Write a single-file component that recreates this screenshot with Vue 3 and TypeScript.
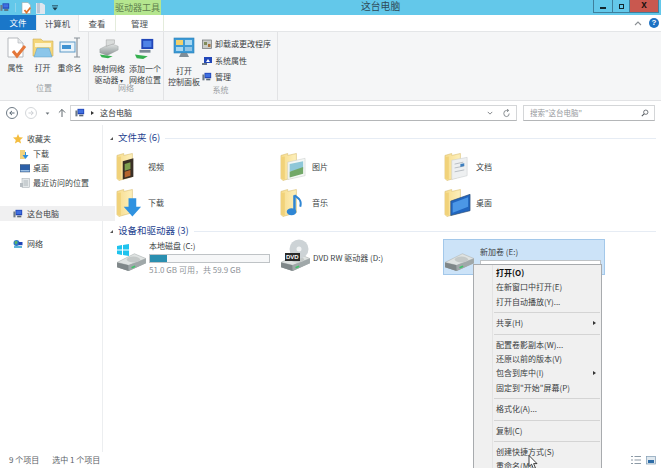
<script setup lang="ts">
const ribbonBig = [
  { icon: 'i-props', lines: ['属性'] },
  { icon: 'i-open', lines: ['打开'] },
  { icon: 'i-rename', lines: ['重命名'] },
]
const folders = [
  { name: '视频', overlay: 'video' },
  { name: '图片', overlay: 'picture' },
  { name: '文档', overlay: 'doc' },
  { name: '下载', overlay: 'down' },
  { name: '音乐', overlay: 'music' },
  { name: '桌面', overlay: 'desk' },
]
const favs = [
  { name: '下载', icon: 'i-fav-down' },
  { name: '桌面', icon: 'i-fav-desk' },
  { name: '最近访问的位置', icon: 'i-fav-recent' },
]
const menu: { label: string; bold?: boolean; arrow?: boolean; hot?: boolean }[][] = [
  [{ label: '打开(O)', bold: true }, { label: '在新窗口中打开(E)' }, { label: '打开自动播放(Y)...' }],
  [{ label: '共享(H)', arrow: true }],
  [
    { label: '配置卷影副本(W)...' },
    { label: '还原以前的版本(V)' },
    { label: '包含到库中(I)', arrow: true },
    { label: '固定到"开始"屏幕(P)' },
  ],
  [{ label: '格式化(A)...' }],
  [{ label: '复制(C)' }],
  [{ label: '创建快捷方式(S)' }, { label: '重命名(M)' }],
  [{ label: '属性(R)', hot: true }],
]
</script>

<template>
  <div class="win">
    <svg class="defs" aria-hidden="true">
      <defs>
        <linearGradient id="fy" x1="0" y1="0" x2="1" y2="0">
          <stop offset="0" stop-color="#f7dc8c" />
          <stop offset="1" stop-color="#fdf0bd" />
        </linearGradient>
        <linearGradient id="dg" x1="0" y1="0" x2="0" y2="1">
          <stop offset="0" stop-color="#e4e7e6" />
          <stop offset="1" stop-color="#8d9596" />
        </linearGradient>
        <symbol id="i-pc" viewBox="0 0 12 12">
          <rect x="3" y="1" width="8" height="6.5" fill="#2146b8" />
          <rect x="4" y="2" width="6" height="4" fill="#3f6fe0" />
          <rect x="0.5" y="3" width="2.5" height="7" fill="#6d7a88" />
          <rect x="5" y="8" width="5" height="2" fill="#5b6875" />
        </symbol>
        <symbol id="i-folder" viewBox="0 0 24 30">
          <path d="M1 3 L8 1 L8 3 L17 1 V25 L3 29 L1 27 Z" fill="url(#fy)" stroke="#d9bd6d" stroke-width=".6" />
          <path d="M1 5 L5 4 V28 L1 27 Z" fill="#f1d27a" />
        </symbol>
        <symbol id="i-drive" viewBox="0 0 32 26">
          <path d="M1 16 L19 7 L31 12 V17 L13 25 L1 21 Z" fill="url(#dg)" />
          <path d="M1 16 L19 7 L31 12 L13 19 Z" fill="#dfe3e2" stroke="#a7adad" stroke-width=".5" />
          <path d="M1 16 L13 19 V25 L1 21 Z" fill="#7f8789" />
          <path d="M13 19 L31 12 V17 L13 25 Z" fill="#a0a8a9" />
          <ellipse cx="18" cy="13" rx="7" ry="3" fill="#c4c9c8" />
          <rect x="16" y="20" width="4" height="1.6" fill="#3fc46a" transform="rotate(-22 18 21)" />
        </symbol>
        <symbol id="i-net-drive" viewBox="0 0 24 22">
          <path d="M2 11 L14 5 L22 8 V12 L10 18 L2 15 Z" fill="url(#dg)" stroke="#8f9697" stroke-width=".4" />
          <path d="M9 1 H18 V5 L9 8 Z" fill="#d9dcdb" stroke="#888" stroke-width=".4" />
          <path d="M2 17 L16 19 L11 21 L4 20 Z" fill="#35b04f" />
        </symbol>
        <symbol id="i-net-add" viewBox="0 0 24 24">
          <rect x="8" y="1" width="13" height="11" fill="#2146b8" />
          <rect x="10" y="3" width="9" height="7" fill="#4f83e6" />
          <rect x="6" y="13" width="12" height="3" fill="#7d8a96" />
          <path d="M1 18 L15 20 L10 23 L3 22 Z" fill="#35b04f" />
        </symbol>
      </defs>
    </svg>

    <div class="titlebar">
      <div class="qat">
        <svg class="ic12"><use href="#i-pc" /></svg>
        <i class="qat-sep"></i>
        <svg class="qat-doc" viewBox="0 0 10 12">
          <path d="M1 0.5 H7 L9.5 3 V11.5 H1 Z" fill="#fff" stroke="#9aa" stroke-width=".6" />
          <path d="M3.5 8 L5.5 10.5 L9.5 5.5" fill="none" stroke="#e0762e" stroke-width="1.8" />
        </svg>
        <svg class="qat-folder" viewBox="0 0 9 12">
          <path d="M0 1 H6 L9 3 V12 H0 Z" fill="#dfe6ee" />
          <rect x="1" y="1" width="3" height="10" fill="#b9c7d6" />
        </svg>
        <svg class="qat-arrow" viewBox="0 0 7 7">
          <rect x="0" y="0.5" width="7" height="1" fill="#1c3947" />
          <path d="M0.5 3 H6.5 L3.5 6.5 Z" fill="#1c3947" />
        </svg>
      </div>
      <div class="tool-tab">驱动器工具</div>
      <div class="title">这台电脑</div>
      <div class="winbtns">
        <div class="wb wb-min"><i></i></div>
        <div class="wb wb-max"><i></i></div>
        <div class="wb wb-close">x</div>
      </div>
    </div>

    <div class="tabs">
      <div class="tab-file">文件</div>
      <div class="tab tab-on">计算机</div>
      <div class="tab tab-view">查看</div>
      <div class="tab tab-manage">管理</div>
      <div class="tab-right">
        <svg class="chev" viewBox="0 0 8 5"><path d="M1 4 L4 1 L7 4" fill="none" stroke="#8a8f94" stroke-width="1.1" /></svg>
        <div class="help">?</div>
      </div>
    </div>

    <div class="ribbon">
      <section class="group g1">
        <div class="group-body">
          <div v-for="b in ribbonBig" :key="b.icon" class="big">
            <svg v-if="b.icon === 'i-props'" class="big-ic" viewBox="0 0 22 22">
              <path d="M3 1 H13 L18 6 V20 H3 Z" fill="#fff" stroke="#b5b9bd" />
              <path d="M13 1 V6 H18" fill="#e6e8ea" stroke="#b5b9bd" stroke-width=".7" />
              <path d="M8 14 L12 19 L20 9" fill="none" stroke="#e4773a" stroke-width="3" />
            </svg>
            <svg v-else-if="b.icon === 'i-open'" class="big-ic" viewBox="0 0 22 22">
              <path d="M1 2 H9 L11 4 H21 V19 H1 Z" fill="#f4d679" stroke="#cdae5a" stroke-width=".6" />
              <rect x="3" y="6" width="16" height="4" fill="#fdf4cf" />
              <path d="M5 11 H17 L20 20 H2 Z" fill="#8bc6ea" stroke="#5f9cc4" stroke-width=".5" />
            </svg>
            <svg v-else class="big-ic" viewBox="0 0 22 22">
              <rect x="1" y="5" width="15" height="10" fill="#e9f3fa" stroke="#5c9ac8" />
              <rect x="3" y="8" width="9" height="4" fill="#3f92d2" />
              <path d="M15 1 H21 M18 1 V20 M15 20 H21" stroke="#8a9299" stroke-width="1.2" fill="none" />
            </svg>
            <span>{{ b.lines[0] }}</span>
          </div>
        </div>
        <div class="group-label">位置</div>
      </section>
      <section class="group g2">
        <div class="group-body">
          <div class="big big-net">
            <svg class="big-ic"><use href="#i-net-drive" /></svg>
            <span>映射网络</span>
            <span>驱动器 <small class="tri">▾</small></span>
          </div>
          <div class="big big-net">
            <svg class="big-ic"><use href="#i-net-add" /></svg>
            <span>添加一个</span>
            <span>网络位置</span>
          </div>
        </div>
        <div class="group-label">网络</div>
      </section>
      <section class="group g3">
        <div class="group-body">
          <div class="big big-panel">
            <svg class="big-ic panel-ic" viewBox="0 0 22 22">
              <rect x="1" y="1" width="20" height="15" fill="#3d9ad6" stroke="#2b7fb5" stroke-width=".6" />
              <rect x="3" y="3" width="7" height="5" fill="#f2d06b" />
              <rect x="12" y="3" width="7" height="5" fill="#a7d8f2" />
              <rect x="3" y="10" width="7" height="4" fill="#a7d8f2" />
              <rect x="12" y="10" width="7" height="4" fill="#8fc4e6" />
              <path d="M8 16 H14 L16 20 H6 Z" fill="#7e8d98" />
            </svg>
            <span>打开</span>
            <span>控制面板</span>
          </div>
          <div class="small-list">
            <div class="small">
              <svg class="ic10" viewBox="0 0 10 10">
                <rect x="0.5" y="1" width="9" height="8.5" fill="#c9ccc8" stroke="#6d7174" stroke-width=".7" />
                <rect x="2" y="3" width="3" height="3" fill="#7f8c5a" />
                <rect x="6" y="5" width="2.5" height="3" fill="#a7713c" />
              </svg>
              卸载或更改程序
            </div>
            <div class="small">
              <svg class="ic10" viewBox="0 0 10 10">
                <rect x="2" y="1" width="8" height="6" fill="#2146b8" />
                <path d="M4 6 L6 3 L8 6 Z" fill="#fff" />
                <rect x="0" y="7" width="5" height="2" fill="#6d7a88" />
              </svg>
              系统属性
            </div>
            <div class="small">
              <svg class="ic10"><use href="#i-pc" /></svg>
              管理
            </div>
          </div>
        </div>
        <div class="group-label">系统</div>
      </section>
    </div>

    <div class="navbar">
      <div class="nav-btn nav-back">
        <svg viewBox="0 0 12 12"><path d="M9 6 H3.5 M6 3.5 L3.3 6 L6 8.5" fill="none" stroke="#4a5a68" stroke-width="1.1" /></svg>
      </div>
      <div class="nav-btn nav-fwd">
        <svg viewBox="0 0 12 12"><path d="M3 6 H8.5 M6 3.5 L8.7 6 L6 8.5" fill="none" stroke="#c8ccd0" stroke-width="1.1" /></svg>
      </div>
      <svg class="nav-drop" viewBox="0 0 6 4"><path d="M0.5 0.5 H5.5 L3 3.5 Z" fill="#6b7278" /></svg>
      <svg class="nav-up" viewBox="0 0 9 11"><path d="M4.5 10 V1.5 M1 5 L4.5 1.5 L8 5" fill="none" stroke="#5d656c" stroke-width="1.1" /></svg>
      <div class="address">
        <svg class="ic10"><use href="#i-pc" /></svg>
        <i class="crumb-tri"></i>
        <span class="crumb">这台电脑</span>
        <svg class="addr-drop" viewBox="0 0 8 5"><path d="M1 1 L4 4 L7 1" fill="none" stroke="#6c7176" stroke-width="1.1" /></svg>
        <svg class="addr-ref" viewBox="0 0 10 10"><path d="M8 5 A3 3.4 0 1 1 5 1.6 H7 M5.5 0 L7.5 1.6 L5.5 3.2" fill="none" stroke="#7e8388" stroke-width="1" /></svg>
      </div>
      <div class="search">
        <span>搜索"这台电脑"</span>
        <svg class="glass" viewBox="0 0 10 10"><circle cx="6" cy="4" r="2.7" fill="none" stroke="#50565c" stroke-width="1" /><path d="M4 6 L1 9" stroke="#50565c" stroke-width="1.3" /></svg>
      </div>
    </div>

    <div class="main">
      <aside class="side">
        <div class="side-row head">
          <svg class="ic10" viewBox="0 0 10 10"><path d="M5 0 L6.4 3.3 L10 3.6 L7.2 6 L8.1 9.6 L5 7.7 L1.9 9.6 L2.8 6 L0 3.6 L3.6 3.3 Z" fill="#f4bd3f" /></svg>
          收藏夹
        </div>
        <div v-for="f in favs" :key="f.name" class="side-row sub">
          <svg v-if="f.icon === 'i-fav-down'" class="ic10" viewBox="0 0 10 10">
            <path d="M0 1 H5 V10 H0 Z" fill="#f2d27b" />
            <path d="M6 3 V6 H8.5 L5.5 10 L2.5 6 H5 V3 Z" fill="#2f8fdc" />
          </svg>
          <svg v-else-if="f.icon === 'i-fav-desk'" class="ic10" viewBox="0 0 10 10">
            <rect x="0" y="1.5" width="10" height="7.5" fill="#2c5fa8" stroke="#4a5c70" stroke-width=".5" />
            <rect x="0.5" y="7" width="9" height="1.5" fill="#9cc0e4" />
          </svg>
          <svg v-else class="ic10" viewBox="0 0 10 10">
            <rect x="2" y="0.5" width="7.5" height="9" fill="#e4e8ea" stroke="#a0a7ac" stroke-width=".5" />
            <path d="M3.5 3 H8 M3.5 5 H8 M3.5 7 H8" stroke="#9aa2a8" stroke-width=".7" />
            <rect x="0" y="5" width="3" height="4" fill="#b6bdc2" />
          </svg>
          {{ f.name }}
        </div>
        <div class="side-row head pc-row">
          <svg class="ic10"><use href="#i-pc" /></svg>
          这台电脑
        </div>
        <div class="side-row head net-row">
          <svg class="ic10" viewBox="0 0 10 10">
            <circle cx="3.5" cy="4" r="3" fill="#2f78c8" />
            <path d="M1.5 2.5 L4 2 L4.5 4 L2.5 5.5 Z" fill="#5cb85c" />
            <rect x="5.5" y="3" width="4" height="3.2" fill="#2146b8" />
            <path d="M1 8 H9" stroke="#35a0d0" stroke-width="1.6" />
          </svg>
          网络
        </div>
      </aside>

      <main class="content">
        <div class="sec-head">
          <i class="sec-tri"></i><span>文件夹 (6)</span><b></b>
        </div>
        <div class="grid">
          <div v-for="f in folders" :key="f.overlay" class="folder">
            <svg class="folder-ic" viewBox="0 0 28 30">
              <use href="#i-folder" width="24" height="30" />
              <g v-if="f.overlay === 'video'">
                <path d="M7 9 L18 6 V25 L7 28 Z" fill="#3a3026" />
                <path d="M9 12 L15 10 V17 L9 19 Z" fill="#7fa04f" />
                <path d="M9 20 L15 18 V24 L9 26 Z" fill="#b5652e" />
              </g>
              <g v-else-if="f.overlay === 'picture'">
                <path d="M8 10 L26 6 V24 L8 28 Z" fill="#f4f7f5" stroke="#c4c8c6" stroke-width=".5" />
                <path d="M10 12 L24 9 V17 L10 20 Z" fill="#8ec7d8" />
                <path d="M10 20 L24 15 V22 L10 26 Z" fill="#72a868" />
              </g>
              <g v-else-if="f.overlay === 'doc'">
                <path d="M8 8 L24 5 V24 L8 28 Z" fill="#eef0f1" stroke="#c4c8ca" stroke-width=".5" />
                <path d="M11 12 L20 10 M11 16 L21 14 M11 20 L21 18" stroke="#a9b0b6" stroke-width=".8" />
                <path d="M17 12 L21 11 V14 L17 15 Z" fill="#3f7fbe" />
              </g>
              <path v-else-if="f.overlay === 'down'" d="M13 10 H21 V19 H26 L17 29 L8 19 H13 Z" fill="#2f92e0" />
              <g v-else-if="f.overlay === 'music'">
                <path d="M15 7 V23" stroke="#2f86d4" stroke-width="2.6" />
                <path d="M15 7 C19 10 23 12 21 19" fill="none" stroke="#2f86d4" stroke-width="2" />
                <ellipse cx="12" cy="24" rx="5" ry="3.6" fill="#2f86d4" />
              </g>
              <g v-else>
                <path d="M7 13 L27 6 V23 L7 28 Z" fill="#2166c0" stroke="#2d4f78" stroke-width=".7" />
                <path d="M9 15 L25 9 V19 L9 25 Z" fill="#4b97e6" />
              </g>
            </svg>
            <span>{{ f.name }}</span>
          </div>
        </div>

        <div class="sec-head sec-two">
          <i class="sec-tri"></i><span>设备和驱动器 (3)</span><b></b>
        </div>
        <div class="grid drives">
          <div class="drive">
            <div class="drive-ic">
              <svg class="drive-svg"><use href="#i-drive" /></svg>
              <svg class="win-logo" viewBox="0 0 12 12">
                <path d="M0 2 L5 1 V5.5 H0 Z M6 1 L12 0 V5.5 H6 Z M0 6.5 H5 V11 L0 10 Z M6 6.5 H12 V12 L6 11 Z" fill="#1fc3ee" />
              </svg>
            </div>
            <div class="drive-info">
              <div class="drive-name">本地磁盘 (C:)</div>
              <div class="bar"><div class="fill" :style="{ width: '14.5%' }"></div></div>
              <div class="drive-free">51.0 GB 可用，共 59.9 GB</div>
            </div>
          </div>
          <div class="drive dvd">
            <div class="drive-ic">
              <svg class="drive-svg"><use href="#i-drive" /></svg>
              <svg class="dvd-disc" viewBox="0 0 20 20">
                <circle cx="10" cy="10" r="9.5" fill="#cdd3d6" />
                <circle cx="10" cy="10" r="2.5" fill="#f2f4f5" />
              </svg>
              <span class="dvd-tag">DVD</span>
            </div>
            <div class="drive-name">DVD RW 驱动器 (D:)</div>
          </div>
          <div class="drive vol">
            <div class="drive-ic">
              <svg class="drive-svg"><use href="#i-drive" /></svg>
            </div>
            <div class="drive-info">
              <div class="drive-name">新加卷 (E:)</div>
              <div class="bar bar-vol"></div>
            </div>
          </div>
        </div>
      </main>
    </div>

    <footer class="status">
      <span>9 个项目</span>
      <span class="status-sel">选中 1 个项目</span>
      <div class="views">
        <svg class="ic10" viewBox="0 0 10 10">
          <path d="M0 1.5 H2 M3.5 1.5 H10 M0 5 H2 M3.5 5 H10 M0 8.5 H2 M3.5 8.5 H10" stroke="#8d9aa6" stroke-width="1.2" />
        </svg>
        <svg class="ic10" viewBox="0 0 10 10">
          <rect x="0.5" y="1.5" width="9" height="7.5" fill="#dfe8ef" stroke="#7f9bb3" stroke-width=".7" />
          <rect x="2" y="5" width="6" height="3" fill="#2e6da8" />
        </svg>
      </div>
    </footer>

    <div class="ctx">
      <template v-for="(grp, i) in menu" :key="i">
        <i v-if="i > 0" class="ctx-sep"></i>
        <div v-for="m in grp" :key="m.label" class="ctx-item" :class="{ bold: m.bold, hot: m.hot }">
          {{ m.label }}
          <i v-if="m.arrow" class="ctx-arrow"></i>
        </div>
      </template>
    </div>
    <svg class="cursor" viewBox="0 0 10 15">
      <path d="M1 0.5 V11.5 L3.6 9.2 L5.4 13.6 L7.4 12.8 L5.6 8.6 H9 Z" fill="#fff" stroke="#111" stroke-width=".8" />
    </svg>
  </div>
</template>

<style>
html,
body {
  margin: 0;
  background: #fff;
}
</style>

<style scoped>
.win {
  position: relative;
  width: 661px;
  height: 468px;
  overflow: hidden;
  display: flex;
  flex-direction: column;
  background: #fff;
  color: #3b3f44;
  font-family: "Noto Sans CJK SC", "Liberation Sans", sans-serif;
  font-size: 8px;
  line-height: 1;
}
.defs {
  position: absolute;
  width: 0;
  height: 0;
}
.ic10 {
  width: 10px;
  height: 10px;
  flex: none;
}
.ic12 {
  width: 10px;
  height: 11px;
  flex: none;
}

.titlebar {
  position: relative;
  height: 15px;
  flex: none;
  display: flex;
  background: #63c8ea;
}
.qat {
  width: 114px;
  display: flex;
  align-items: center;
  flex: none;
}
.qat-sep {
  width: 1px;
  height: 9px;
  margin-left: 5px;
  background: #8fd4ec;
}
.qat-doc {
  width: 10px;
  height: 12px;
  margin-left: 5px;
}
.qat-folder {
  width: 9px;
  height: 12px;
  margin-left: 5px;
}
.qat-arrow {
  width: 6px;
  height: 6px;
  margin-left: 7px;
}
.tool-tab {
  width: 47px;
  flex: none;
  display: flex;
  align-items: center;
  justify-content: center;
  background: #b5e68f;
  color: #5f7f4d;
  font-size: 9px;
}
.title {
  position: absolute;
  left: 361px;
  top: 2px;
  font-size: 9.8px;
  color: #2f4a58;
}
.winbtns {
  position: absolute;
  top: 0;
  right: 2px;
  display: flex;
  height: 13px;
  border: 1px solid #3f7f9c;
  border-top: none;
  box-sizing: border-box;
}
.wb {
  height: 12px;
  display: flex;
  align-items: center;
  justify-content: center;
}
.wb-min {
  width: 18px;
  border-right: 1px solid #3f7f9c;
}
.wb-min i {
  width: 6px;
  height: 2px;
  margin-top: 3px;
  background: #12262e;
}
.wb-max {
  width: 16px;
  border-right: 1px solid #3f7f9c;
}
.wb-max i {
  width: 5px;
  height: 5px;
  border: 1.5px solid #12262e;
  box-sizing: border-box;
}
.wb-close {
  width: 28px;
  background: #c9584f;
  color: #20130f;
  font-family: "Liberation Sans", sans-serif;
  font-weight: 700;
  font-size: 10px;
  padding-bottom: 2px;
  box-sizing: border-box;
}

.tabs {
  height: 17px;
  flex: none;
  display: flex;
  background: #fff;
  border-bottom: 1px solid #e4e6e8;
  box-sizing: border-box;
  font-size: 8.5px;
  color: #4a4f54;
}
.tab-file {
  width: 36px;
  height: 15px;
  display: flex;
  align-items: center;
  justify-content: center;
  background: #1a77c9;
  color: #fff;
}
.tab {
  display: flex;
  align-items: center;
  justify-content: center;
  height: 16px;
}
.tab-on {
  width: 41px;
  background: #f5f6f7;
  border-left: 1px solid #e4e6e8;
  border-right: 1px solid #e4e6e8;
  height: 17px;
}
.tab-view {
  width: 36px;
}
.tab-manage {
  width: 47px;
  border-left: 1px solid #e4ecdc;
  border-right: 1px solid #e4ecdc;
}
.tab-right {
  margin-left: auto;
  margin-right: 2px;
  display: flex;
  align-items: center;
  gap: 7px;
}
.chev {
  width: 8px;
  height: 5px;
}
.help {
  width: 10px;
  height: 10px;
  border-radius: 50%;
  background: #1c72c4;
  color: #fff;
  font: 700 8px/10px "Liberation Sans", sans-serif;
  text-align: center;
}

.ribbon {
  height: 69px;
  flex: none;
  display: flex;
  background: #f5f6f7;
  border-bottom: 1px solid #e2e3e5;
  box-sizing: border-box;
}
.group {
  display: flex;
  flex-direction: column;
  border-right: 1px solid #e2e3e5;
  box-sizing: border-box;
}
.g1 {
  width: 89px;
}
.g2 {
  width: 75px;
}
.g3 {
  width: 114px;
}
.group-body {
  flex: 1;
  display: flex;
  padding: 5px 0 0 2px;
}
.group-label {
  height: 16px;
  text-align: center;
  color: #9a9ea3;
}
.big {
  width: 27px;
  display: flex;
  flex-direction: column;
  align-items: center;
  gap: 3px;
  white-space: nowrap;
}
.big-ic {
  width: 22px;
  height: 22px;
  margin-bottom: 2px;
}
.big-net {
  width: 36px;
}
.big-net .big-ic {
  margin-top: 1px;
}
.big-panel {
  width: 36px;
}
.panel-ic {
  margin-bottom: 5px;
}
.tri {
  font-size: 6px;
}
.small-list {
  display: flex;
  flex-direction: column;
  gap: 6.5px;
  padding-top: 2px;
}
.small {
  height: 10px;
  display: flex;
  align-items: center;
  gap: 3px;
  white-space: nowrap;
}

.navbar {
  height: 24px;
  flex: none;
  display: flex;
  align-items: center;
  padding-left: 6px;
  box-sizing: border-box;
}
.nav-btn {
  width: 12px;
  height: 12px;
  border-radius: 50%;
  box-sizing: border-box;
}
.nav-btn svg {
  display: block;
  width: 10px;
  height: 10px;
}
.nav-back {
  border: 1px solid #6f7b86;
}
.nav-fwd {
  margin-left: 7px;
  border: 1px solid #d4d7da;
}
.nav-drop {
  width: 5px;
  height: 3px;
  margin-left: 8px;
}
.nav-up {
  width: 8px;
  height: 10px;
  margin-left: 8px;
}
.address {
  width: 447px;
  height: 16px;
  margin-left: 4px;
  display: flex;
  align-items: center;
  padding-left: 4px;
  box-sizing: border-box;
  border: 1px solid #d4d6d8;
  border-bottom-color: #b4b6b8;
  color: #33383c;
}
.crumb-tri {
  width: 0;
  height: 0;
  margin-left: 6px;
  border-left: 3px solid #333;
  border-top: 2.5px solid transparent;
  border-bottom: 2.5px solid transparent;
}
.crumb {
  margin-left: 6px;
}
.addr-drop {
  width: 6px;
  height: 4px;
  margin-left: auto;
}
.addr-ref {
  width: 9px;
  height: 9px;
  margin: 0 5px 0 9px;
}
.search {
  width: 132px;
  height: 16px;
  margin-left: 6px;
  display: flex;
  align-items: center;
  justify-content: space-between;
  padding: 0 5px 0 6px;
  box-sizing: border-box;
  border: 1px solid #d4d6d8;
  border-bottom-color: #b4b6b8;
  color: #96999d;
  font-size: 7.5px;
}
.glass {
  width: 8px;
  height: 8px;
}

.main {
  flex: 1;
  min-height: 0;
  display: flex;
}
.side {
  width: 103px;
  flex: none;
  box-sizing: border-box;
  border-right: 1px solid #eceef0;
  padding-top: 7px;
}
.side-row {
  height: 14.6px;
  display: flex;
  align-items: center;
  gap: 4px;
  white-space: nowrap;
}
.head {
  padding-left: 13px;
}
.sub {
  padding-left: 20px;
  gap: 3px;
}
.pc-row {
  margin-top: 16px;
  width: 102px;
  height: 15px;
  background: #f0f0f1;
}
.net-row {
  margin-top: 15px;
}

.content {
  flex: 1;
  min-width: 0;
  padding: 7px 5px 0 7px;
}
.sec-head {
  height: 12px;
  display: flex;
  align-items: center;
  color: #1e3f8f;
  font-size: 9.5px;
}
.sec-head b {
  flex: 1;
  height: 1px;
  margin-left: 5px;
  background: #e6ecf4;
}
.sec-tri {
  width: 0;
  height: 0;
  margin-right: 5px;
  border-left: 3px solid transparent;
  border-bottom: 3px solid #555;
}
.sec-two {
  margin-top: 4px;
}
.grid {
  display: grid;
  grid-template-columns: repeat(3, 164px);
  padding-left: 6px;
  margin-top: 5px;
}
.folder {
  height: 36px;
  display: flex;
  align-items: center;
  gap: 5px;
  white-space: nowrap;
  margin-bottom: 0;
}
.folder-ic {
  width: 27px;
  height: 30px;
  flex: none;
}
.drives {
  margin-top: 2px;
}
.drive {
  height: 36px;
  display: flex;
  align-items: center;
}
.drive-ic {
  position: relative;
  width: 33px;
  height: 36px;
  flex: none;
}
.drive-svg {
  position: absolute;
  left: 0;
  bottom: 3px;
  width: 31px;
  height: 25px;
}
.win-logo {
  position: absolute;
  left: 1px;
  top: 5px;
  width: 12px;
  height: 12px;
}
.dvd-disc {
  position: absolute;
  left: 9px;
  top: 0;
  width: 20px;
  height: 20px;
}
.dvd-tag {
  position: absolute;
  left: 5px;
  top: 14px;
  padding: 0 1px;
  background: #2a2a2a;
  color: #fff;
  font: 700 6px/8px "Liberation Sans", sans-serif;
}
.drive-info {
  flex: 1;
  min-width: 0;
  display: flex;
  flex-direction: column;
}
.drive-name {
  height: 11px;
  line-height: 11px;
  white-space: nowrap;
}
.bar {
  width: 121px;
  height: 9px;
  margin-top: 3px;
  border: 1px solid #bfc3c6;
  box-sizing: border-box;
  background: #f6f7f8;
}
.fill {
  height: 100%;
  background: #2a8fb0;
}
.drive-free {
  margin-top: 3px;
  color: #8f9499;
  white-space: nowrap;
}
.dvd {
  padding-left: 0;
}
.vol {
  width: 162px;
  box-sizing: border-box;
  margin-left: -1px;
  padding-left: 0;
  background: #cce3f8;
  border: 1px solid #a3c8ea;
}
.vol .drive-info {
  margin-left: 3px;
}
.bar-vol {
  background: #fff;
}

.status {
  height: 16px;
  flex: none;
  display: flex;
  align-items: center;
  padding: 0 5px 0 9px;
  color: #5d6267;
}
.status-sel {
  margin-left: 13px;
}
.views {
  margin-left: auto;
  display: flex;
  gap: 5px;
}

.ctx {
  position: absolute;
  left: 473px;
  top: 264px;
  width: 129px;
  box-sizing: border-box;
  padding: 1px;
  border: 1px solid #a8abae;
  background: #f0f0f0;
  background-image: linear-gradient(#e3e3e3, #e3e3e3);
  background-size: 1px 100%;
  background-position: 18px 0;
  background-repeat: no-repeat;
  color: #3a3d40;
}
.ctx-item {
  position: relative;
  height: 14.4px;
  line-height: 14.4px;
  padding-left: 21px;
  white-space: nowrap;
}
.bold {
  font-weight: 700;
  color: #111;
}
.hot {
  height: 15px;
  line-height: 13px;
  margin-top: 1px;
  box-sizing: border-box;
  background: #cfe6f8;
  border: 1px solid #79b2e4;
  padding-left: 20px;
}
.ctx-sep {
  display: block;
  height: 1px;
  margin: 3px 0 3px 19px;
  background: #d4d4d4;
}
.ctx-arrow {
  position: absolute;
  right: 4px;
  top: 5px;
  width: 0;
  height: 0;
  border-left: 3px solid #333;
  border-top: 2.5px solid transparent;
  border-bottom: 2.5px solid transparent;
}
.cursor {
  position: absolute;
  left: 528px;
  top: 455px;
  width: 10px;
  height: 15px;
}
</style>
